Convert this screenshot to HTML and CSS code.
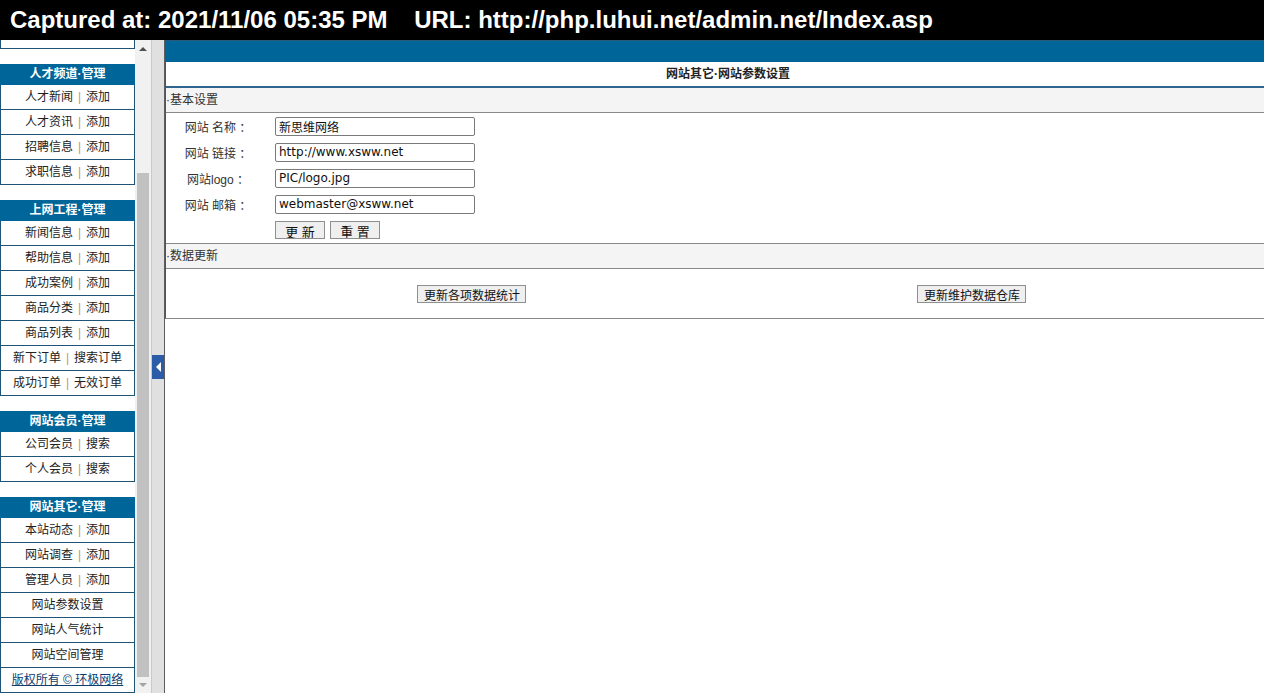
FILE: index.html
```html
<!DOCTYPE html>
<html lang="zh-CN">
<head>
    <meta charset="UTF-8">
    <title>网站参数设置</title>
    <link rel="stylesheet" href="styles.css">
</head>
<body>

<div class="capture">Captured at: 2021/11/06 05:35 PM    URL: http://php.luhui.net/admin.net/Index.asp</div>

<div class="frames">

    <!-- 左侧菜单 -->
    <div class="left">
        <div class="menu">
            <div class="stub"></div>

            <div class="group">
                <div class="head">人才频道·管理</div>
                <div class="item"><a href="#">人才新闻</a><span class="sep">|</span><a href="#">添加</a></div>
                <div class="item"><a href="#">人才资讯</a><span class="sep">|</span><a href="#">添加</a></div>
                <div class="item"><a href="#">招聘信息</a><span class="sep">|</span><a href="#">添加</a></div>
                <div class="item"><a href="#">求职信息</a><span class="sep">|</span><a href="#">添加</a></div>
            </div>

            <div class="group">
                <div class="head">上网工程·管理</div>
                <div class="item"><a href="#">新闻信息</a><span class="sep">|</span><a href="#">添加</a></div>
                <div class="item"><a href="#">帮助信息</a><span class="sep">|</span><a href="#">添加</a></div>
                <div class="item"><a href="#">成功案例</a><span class="sep">|</span><a href="#">添加</a></div>
                <div class="item"><a href="#">商品分类</a><span class="sep">|</span><a href="#">添加</a></div>
                <div class="item"><a href="#">商品列表</a><span class="sep">|</span><a href="#">添加</a></div>
                <div class="item"><a href="#">新下订单</a><span class="sep">|</span><a href="#">搜索订单</a></div>
                <div class="item"><a href="#">成功订单</a><span class="sep">|</span><a href="#">无效订单</a></div>
            </div>

            <div class="group">
                <div class="head">网站会员·管理</div>
                <div class="item"><a href="#">公司会员</a><span class="sep">|</span><a href="#">搜索</a></div>
                <div class="item"><a href="#">个人会员</a><span class="sep">|</span><a href="#">搜索</a></div>
            </div>

            <div class="group">
                <div class="head">网站其它·管理</div>
                <div class="item"><a href="#">本站动态</a><span class="sep">|</span><a href="#">添加</a></div>
                <div class="item"><a href="#">网站调查</a><span class="sep">|</span><a href="#">添加</a></div>
                <div class="item"><a href="#">管理人员</a><span class="sep">|</span><a href="#">添加</a></div>
                <div class="item"><a href="#">网站参数设置</a></div>
                <div class="item"><a href="#">网站人气统计</a></div>
                <div class="item"><a href="#">网站空间管理</a></div>
                <div class="item copy"><a href="#">版权所有 © 环极网络</a></div>
            </div>
        </div>

        <!-- 滚动条 -->
        <div class="scroll">
            <div class="up"></div>
            <div class="track"><div class="thumb"></div></div>
            <div class="down"></div>
        </div>
    </div>

    <!-- 分隔栏 -->
    <div class="split"><div class="toggle"></div></div>

    <!-- 右侧内容 -->
    <div class="main">
        <div class="topbar"></div>
        <div class="panel">
            <div class="title">网站其它·网站参数设置</div>

            <div class="sect">·基本设置</div>
            <form class="conf" action="#">
                <label>网站 名称 ：</label>
                <div class="cell"><input type="text" name="webname" value="新思维网络"></div>
                <label>网站 链接 ：</label>
                <div class="cell"><input type="text" name="weburl" value="http://www.xsww.net"></div>
                <label>网站logo ：</label>
                <div class="cell"><input type="text" name="weblogo" value="PIC/logo.jpg"></div>
                <label>网站 邮箱 ：</label>
                <div class="cell"><input type="text" name="webmail" value="webmaster@xsww.net"></div>
                <div></div>
                <div class="cell btns">
                    <input type="button" value="更 新" name="submit">
                    <input type="reset" value="重 置" name="reset">
                </div>
            </form>

            <div class="sect line">·数据更新</div>
            <div class="update">
                <input type="button" value="更新各项数据统计">
                <input type="button" value="更新维护数据仓库">
            </div>
        </div>
    </div>
</div>

</body>
</html>
```

FILE: styles.css
```css
* {
    padding: 0;
    margin: 0;
}
body {
    background: #fff;
    font-family: "Liberation Sans", "Noto Sans CJK SC", sans-serif;
    font-size: 12px;
    color: #222;
    overflow: hidden;
}
.capture {
    height: 40px;
    line-height: 40px;
    padding-left: 10px;
    background: #000;
    color: #fff;
    font-size: 24px;
    font-weight: 700;
    white-space: pre;
}
.frames {
    display: flex;
    height: 653px;
}

/* 左侧菜单 */
.left {
    display: flex;
    width: 151px;
}
.menu {
    width: 135px;
    overflow: hidden;
}
.stub {
    height: 8px;
    border: 1px solid #1e5577;
    border-top: 0;
}
.group {
    margin-top: 15px;
}
.head {
    height: 21px;
    line-height: 21px;
    text-align: center;
    font-weight: 700;
    color: #fff;
    background: #006699;
}
.item {
    height: 24px;
    line-height: 24px;
    text-align: center;
    border: 1px solid #1e5577;
    border-top: 0;
}
.item a {
    color: #222;
    text-decoration: none;
}
.item .sep {
    margin: 0 5px;
    color: #c8965a;
}
.item.copy a {
    color: #0f3d6e;
    text-decoration: underline;
}

/* 滚动条 */
.scroll {
    width: 16px;
    display: flex;
    flex-direction: column;
    background: #f1f1f1;
}
.scroll .up,
.scroll .down {
    height: 17px;
    display: flex;
    align-items: center;
    justify-content: center;
}
.scroll .down {
    height: 16px;
}
.scroll .up::before {
    content: "";
    border-left: 4px solid transparent;
    border-right: 4px solid transparent;
    border-bottom: 4px solid #505050;
}
.scroll .down::before {
    content: "";
    border-left: 4px solid transparent;
    border-right: 4px solid transparent;
    border-top: 4px solid #a3a3a3;
}
.scroll .track {
    flex: 1;
    padding: 116px 2px 0;
}
.scroll .thumb {
    height: 504px;
    background: #c1c1c1;
}

/* 分隔栏 */
.split {
    width: 12px;
    display: flex;
    align-items: center;
    background: #e0e0e0;
    border-left: 1px solid #c9c9c9;
    border-right: 1px solid #5e5e5e;
}
.toggle {
    width: 12px;
    height: 24px;
    display: flex;
    align-items: center;
    justify-content: center;
    background: #2b5ca8;
}
.toggle::before {
    content: "";
    border-top: 5px solid transparent;
    border-bottom: 5px solid transparent;
    border-right: 5px solid #fff;
}

/* 右侧内容 */
.main {
    flex: 1;
}
.topbar {
    height: 21px;
    background: #006699;
    border-top: 1px solid #2a5a78;
}
.panel {
    border-left: 1px solid #2a5f82;
    border-bottom: 1px solid #8a8a8a;
}
.title {
    height: 24px;
    line-height: 25px;
    padding-left: 26px;
    text-align: center;
    font-weight: 700;
    color: #222;
    border-bottom: 2px solid #2f6690;
}
.sect {
    height: 24px;
    line-height: 24px;
    color: #333;
    background: #f4f4f4;
    border-bottom: 1px solid #8a8a8a;
}
.sect.line {
    border-top: 1px solid #8a8a8a;
}
.conf {
    display: grid;
    grid-template-columns: 104px 1fr;
    grid-auto-rows: 26px;
    align-items: center;
}
.conf label {
    text-align: center;
    color: #333;
}
.conf .cell {
    padding-left: 5px;
}
.conf input[type="text"] {
    width: 200px;
    height: 19px;
    box-sizing: border-box;
    padding: 0 3px;
    border: 1px solid #7a7a7a;
    border-radius: 2px;
    font-family: "DejaVu Sans", "Noto Sans CJK SC", sans-serif;
    font-size: 12px;
    color: #111;
    outline: none;
}
.conf .btns {
    display: flex;
    gap: 5px;
}
input[type="button"],
input[type="reset"] {
    height: 18px;
    padding: 0 6px;
    border: 1px solid #8f8f8f;
    background: #efefef;
    font-family: "Liberation Sans", "Noto Sans CJK SC", sans-serif;
    font-size: 12px;
    color: #111;
}
.conf .btns input {
    width: 50px;
    padding: 0;
    font-size: 13px;
}
.update {
    height: 49px;
    display: flex;
    align-items: center;
    justify-content: center;
    gap: 391px;
    padding-left: 13px;
}
.update input {
    width: 109px;
}
```
